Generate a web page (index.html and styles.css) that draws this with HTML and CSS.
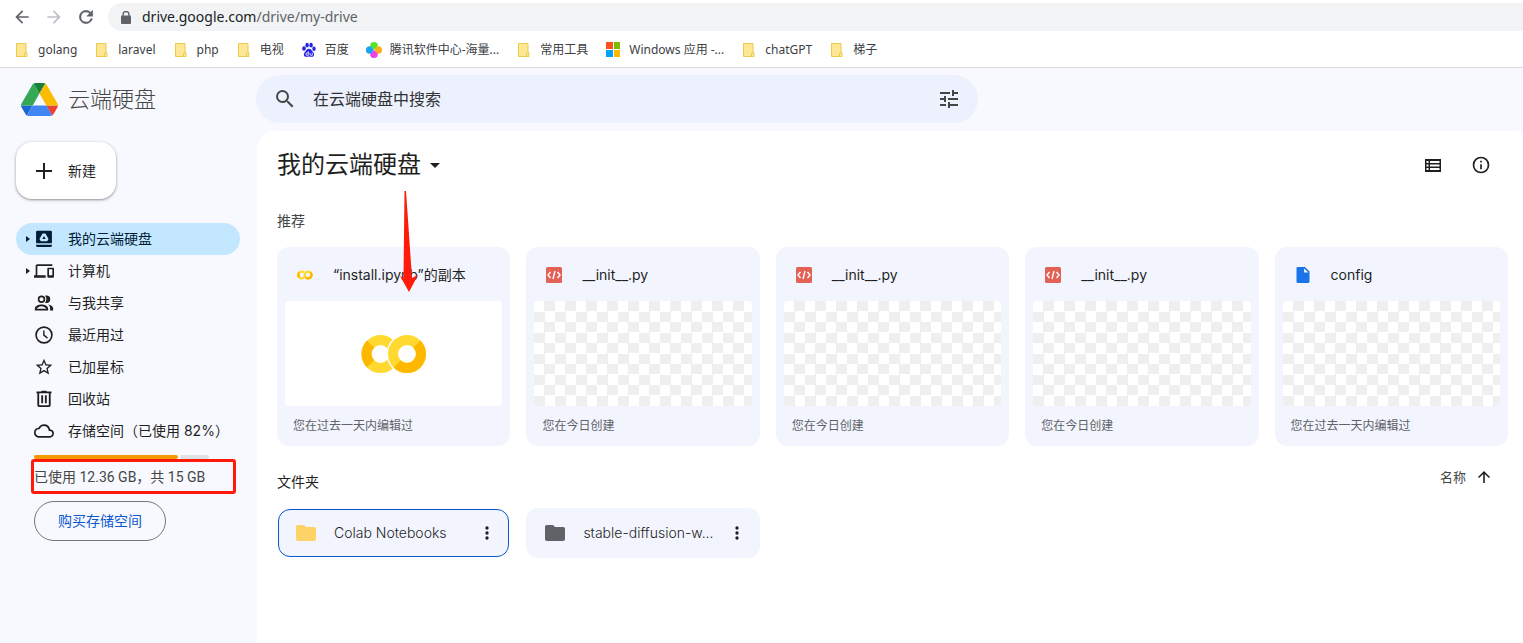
FILE: index.html
```html
<!DOCTYPE html>
<html lang="zh-CN">
<head>
<meta charset="utf-8">
<title>我的云端硬盘</title>
<link rel="stylesheet" href="styles.css">
</head>
<body>
<svg class="defs" aria-hidden="true">
  <symbol id="mark" viewBox="0 0 16 16"><path d="M2.500 1.500h9.500v9l1 .5v3.500h-10.500z" fill="#fde793" stroke="#ecc94f"/><path d="M10.500 14v-2.500q0-1 1.500-1" fill="none" stroke="#ecc94f"/></symbol>
  <symbol id="colab" viewBox="0 0 66 40">
    <circle cx="19.500" cy="20" r="14" fill="none" stroke="#ffd930" stroke-width="10"/>
    <path d="M9.600 10.100a14 14 0 0 0 0 19.800" fill="none" stroke="#ffb800" stroke-width="10"/>
    <circle cx="46" cy="20" r="20.500" class="colab-gap"/>
    <circle cx="46" cy="20" r="14" fill="none" stroke="#ffd930" stroke-width="10"/>
    <path d="M55.900 10.100a14 14 0 0 1-19.800 19.800" fill="none" stroke="#ffb800" stroke-width="10"/>
  </symbol>
  <symbol id="code" viewBox="0 0 16 16"><rect width="16" height="16" rx="1.500" fill="#e46155"/><path d="M4.500 5 2 8l2.500 3M11.500 5 14 8l-2.500 3M9 4 7 12" fill="none" stroke="#fff" stroke-width="1.400"/></symbol>
  <symbol id="dots" viewBox="0 0 24 24"><circle cx="12" cy="6" r="2"/><circle cx="12" cy="12" r="2"/><circle cx="12" cy="18" r="2"/></symbol>
  <symbol id="folder" viewBox="0 0 20 16"><path d="M1.800 0H8l2 2h8.200Q20 2 20 3.800v10.400q0 1.800-1.800 1.800H1.800Q0 16 0 14.200V1.800Q0 0 1.800 0z"/></symbol>
  <symbol id="caret" viewBox="0 0 4 6"><path d="M0 0l4 3-4 3z"/></symbol>
</svg>

<div class="toolbar">
  <button class="tool" aria-label="后退"><svg viewBox="0 0 24 24"><path d="M20 11H7.830l5.590-5.590L12 4l-8 8 8 8 1.410-1.410L7.830 13H20v-2z"/></svg></button>
  <button class="tool off" aria-label="前进"><svg viewBox="0 0 24 24"><path d="M12 4l-1.410 1.410L16.170 11H4v2h12.170l-5.580 5.590L12 20l8-8z"/></svg></button>
  <button class="tool" aria-label="刷新"><svg viewBox="0 0 24 24"><path d="M17.650 6.350A7.960 7.960 0 0 0 12 4a8 8 0 1 0 7.730 10h-2.080A6 6 0 1 1 12 6c1.660 0 3.140.69 4.220 1.780L13 11h7V4l-2.350 2.350z" stroke="#5f6368" stroke-width=".6"/></svg></button>
  <div class="omnibox">
    <svg class="lock" viewBox="0 0 10 13"><path d="M2 5V3.500a3 3 0 0 1 6 0V5" fill="none" stroke="#5f6368" stroke-width="1.400"/><rect y="4.500" width="10" height="8.500" rx="1"/></svg>
    <span>drive.google.com<span class="path">/drive/my-drive</span></span>
  </div>
</div>

<nav class="bookmarks" aria-label="书签">
  <a href="#"><svg><use href="#mark"/></svg>golang</a>
  <a href="#"><svg><use href="#mark"/></svg>laravel</a>
  <a href="#"><svg><use href="#mark"/></svg>php</a>
  <a href="#"><svg><use href="#mark"/></svg>电视</a>
  <a href="#"><svg viewBox="0 0 16 16"><g fill="#2424e0"><ellipse cx="3" cy="6.500" rx="1.800" ry="2.300"/><ellipse cx="6.100" cy="3.200" rx="1.700" ry="2.400"/><ellipse cx="10.100" cy="3.200" rx="1.700" ry="2.400"/><ellipse cx="13" cy="6.800" rx="1.700" ry="2.200"/><path d="M8 6.800c2 0 2.600 1.900 4 3.100 1.800 1.600 1.500 4.900-1 4.900-1 0-1.800-.4-3-.4s-2 .4-3 .4c-2.500 0-2.800-3.300-1-4.900 1.400-1.200 2-3.100 4-3.100z"/></g><path d="M7.300 9.300v4H6a1.200 1.200 0 0 1 0-2.400h1.300M9 10.800v1.700q0 .8.800.8h1.500v-2.500" fill="none" stroke="#fff" stroke-width=".8"/></svg>百度</a>
  <a href="#"><svg viewBox="0 0 16 16"><path d="M8 7.800 5 5.500C3.500 3.500 4 0 8 0s4.500 3.500 3 5.500z" fill="#55e52b"/><path d="M8.200 8 10.500 5C12.500 3.500 16 4 16 8s-3.500 4.500-5.500 3z" fill="#ffae1a"/><path d="M8 8.200l3 2.300c1.500 2 1 5.500-3 5.500s-4.500-3.500-3-5.500z" fill="#f23fe0"/><path d="M7.800 8l-2.300 3C3.500 12.500 0 12 0 8s3.500-4.500 5.500-3z" fill="#1aa0f5"/></svg>腾讯软件中心-海量...</a>
  <a href="#"><svg><use href="#mark"/></svg>常用工具</a>
  <a href="#"><svg viewBox="0 0 16 16"><path d="M1 0h7v7H1z" fill="#f9501d"/><path d="M9 0h6v7H9z" fill="#7fba00"/><path d="M1 8h7v7H1z" fill="#00a1f1"/><path d="M9 8h6v7H9z" fill="#ffb901"/></svg>Windows 应用 -...</a>
  <a href="#"><svg><use href="#mark"/></svg>chatGPT</a>
  <a href="#"><svg><use href="#mark"/></svg>梯子</a>
</nav>

<div class="app">
  <header class="header">
    <a class="brand" href="#">
      <svg viewBox="0 0 87.300 78"><path d="m6.600 66.850 3.850 6.650c.8 1.400 1.950 2.500 3.300 3.300l13.750-23.800h-27.500c0 1.550.4 3.100 1.200 4.500z" fill="#1967d2"/><path d="m43.650 25-13.750-23.800c-1.350.8-2.500 1.900-3.300 3.300l-25.400 44a9.060 9.060 0 0 0-1.200 4.500h27.500z" fill="#34a853"/><path d="m73.550 76.800c1.350-.8 2.500-1.900 3.300-3.300l1.600-2.750 7.650-13.250c.8-1.400 1.200-2.950 1.200-4.500h-27.502l5.852 11.500z" fill="#ea4335"/><path d="m43.650 25 13.750-23.800c-1.350-.8-2.900-1.200-4.500-1.200h-18.500c-1.600 0-3.150.45-4.500 1.200z" fill="#188038"/><path d="m59.800 53h-32.300l-13.750 23.800c1.350.8 2.900 1.200 4.500 1.200h50.800c1.600 0 3.150-.45 4.500-1.200z" fill="#4285f4"/><path d="m73.400 26.500-12.700-22c-.8-1.400-1.950-2.500-3.300-3.300l-13.750 23.800 16.150 28h27.450c0-1.550-.4-3.100-1.200-4.500z" fill="#fbbc04"/></svg>
      云端硬盘
    </a>
    <form class="search">
      <svg class="icon24" viewBox="0 0 24 24"><path d="M15.500 14h-.79l-.28-.27A6.470 6.470 0 0 0 16 9.500 6.500 6.500 0 1 0 9.500 16c1.610 0 3.090-.59 4.230-1.570l.27.28v.79l5 4.990L20.490 19l-4.990-5zm-6 0a4.500 4.500 0 1 1 0-9 4.500 4.500 0 0 1 0 9z"/></svg>
      <input type="text" placeholder="在云端硬盘中搜索" aria-label="在云端硬盘中搜索">
      <button class="plain" type="button" aria-label="高级搜索"><svg class="icon24" viewBox="0 0 24 24"><path d="M3 17v2h6v-2H3zM3 5v2h10V5H3zm10 16v-2h8v-2h-8v-2h-2v6h2zM7 9v2H3v2h4v2h2V9H7zm14 4v-2H11v2h10zm-6-4h2V7h4V5h-4V3h-2v6z"/></svg></button>
    </form>
  </header>

  <aside class="sidebar">
    <button class="new"><svg viewBox="0 0 16 16"><path d="M7 0h2v7h7v2H9v7H7V9H0V7h7z"/></svg>新建</button>
    <nav class="nav" aria-label="云端硬盘">
      <a class="active" href="#"><svg class="caret"><use href="#caret"/></svg><svg class="ico" viewBox="0 0 24 24"><path fill-rule="evenodd" d="M4 2h16q1.500 0 1.500 1.500V17h-19V3.500Q2.500 2 4 2zM10.300 5.500 6.500 12l1.700 2.800h7.600l1.700-2.800-3.800-6.500zM12 8.500l2 3.500h-4zM2.500 19h19v1.500q0 1-1.500 1H4q-1.500 0-1.500-1z"/></svg>我的云端硬盘</a>
      <a href="#"><svg class="caret"><use href="#caret"/></svg><svg class="ico" viewBox="0 0 24 24"><path d="M4 6h18V4H4c-1.100 0-2 .9-2 2v11H0v3h14v-3H4V6zm19 2h-6c-.55 0-1 .45-1 1v10c0 .55.45 1 1 1h6c.55 0 1-.45 1-1V9c0-.55-.45-1-1-1zm-1 9h-4v-7h4v7z"/></svg>计算机</a>
      <a href="#"><span class="caret"></span><svg class="ico" viewBox="0 0 24 24"><path d="M9 13.750c-3.340 0-8 1.670-8 5V21h16v-2.250c0-3.330-4.660-5-8-5zM3.200 19c.3-1.500 3.300-3.250 5.800-3.250S14.500 17.500 14.800 19zM9 12a4.500 4.500 0 1 0 0-9 4.500 4.500 0 0 0 0 9zm0-7a2.500 2.500 0 1 1 0 5 2.500 2.500 0 0 1 0-5zM17 13.900c1.300.9 2.300 2.300 2.300 4.200V21H23v-2.500c0-2.600-3-4.100-6-4.600zM15 12a4.500 4.500 0 0 0 0-9c-.6 0-1.200.1-1.700.4a6.500 6.500 0 0 1 0 8.200c.5.300 1.100.4 1.700.4z"/></svg>与我共享</a>
      <a href="#"><span class="caret"></span><svg class="ico" viewBox="0 0 24 24"><circle cx="12" cy="12" r="9.500" fill="none" stroke="#1f1f1f" stroke-width="2"/><path d="M11 6.500h1.700v5.300l4 3.200-1 1.400L11 12.600z"/></svg>最近用过</a>
      <a href="#"><span class="caret"></span><svg class="ico" viewBox="0 0 24 24"><path d="M22 9.240l-7.190-.62L12 2 9.190 8.630 2 9.240l5.460 4.730L5.820 21 12 17.270 18.180 21l-1.630-7.030L22 9.240zM12 15.400l-3.760 2.270 1-4.280-3.320-2.880 4.380-.38L12 6.100l1.710 4.040 4.380.38-3.320 2.880 1 4.280L12 15.400z"/></svg>已加星标</a>
      <a href="#"><span class="caret"></span><svg class="ico" viewBox="0 0 24 24"><path fill-rule="evenodd" d="M3 3h5.500l1-1h5l1 1H21v2.200h-1V19.500q0 2-2 2H6q-2 0-2-2V5.200H3zM6.200 5.200v14.200h11.600V5.200zM8.700 7.500h2.200v9.500H8.700zM13.100 7.500h2.200v9.500h-2.200z"/></svg>回收站</a>
      <a href="#"><span class="caret"></span><svg class="ico" viewBox="0 0 24 24"><path d="M19.350 10.040A7.490 7.490 0 0 0 12 4C9.110 4 6.600 5.640 5.350 8.040A5.994 5.994 0 0 0 0 14c0 3.310 2.690 6 6 6h13c2.760 0 5-2.240 5-5 0-2.640-2.050-4.780-4.650-4.960zM19 18H6c-2.210 0-4-1.790-4-4 0-2.050 1.530-3.760 3.560-3.970l1.070-.11.500-.95A5.469 5.469 0 0 1 12 6c2.620 0 4.880 1.860 5.390 4.430l.3 1.500 1.530.11A2.980 2.980 0 0 1 22 15c0 1.650-1.350 3-3 3z"/></svg>存储空间（已使用 82%）</a>
    </nav>
    <div class="storage">
      <div class="meter"><span class="used" style="width:82%"></span><span class="free"></span></div>
      <p>已使用 12.36 GB，共 15 GB<span class="highlight"></span></p>
      <button class="buy">购买存储空间</button>
    </div>
  </aside>

  <main class="main">
    <div class="titlebar">
      <button class="title">我的云端硬盘<svg viewBox="0 0 10 5"><path d="M0 0h10L5 5z"/></svg></button>
      <div class="actions">
        <button class="plain" aria-label="列表视图"><svg class="list" viewBox="0 0 16 13"><path fill-rule="evenodd" d="M0 0h16v13H0zM1.500 2v2h2V2zM5 2v2h9.500V2zM1.500 5.500v2h2v-2zM5 5.500v2h9.500v-2zM1.500 9v2h2V9zM5 9v2h9.500V9z"/></svg></button>
        <button class="plain" aria-label="查看详细信息"><svg class="ico" viewBox="0 0 24 24"><path d="M11 7h2v2h-2zm0 4h2v6h-2zm1-9a10 10 0 1 0 0 20 10 10 0 0 0 0-20zm0 18a8 8 0 1 1 0-16 8 8 0 0 1 0 16z"/></svg></button>
      </div>
    </div>
    <h2 class="suggest">推荐</h2>
    <div class="grid">
      <article class="card"><h3><svg class="type"><use href="#colab"/></svg>“install.ipynb”的副本</h3><div class="preview blank"><svg><use href="#colab"/></svg></div><p>您在过去一天内编辑过</p>
        <svg class="arrow" viewBox="0 0 18 101"><path d="M4.500 0h1.500l6 87 6-3-9 17L0 85l3.500 2z"/></svg></article>
      <article class="card"><h3><svg class="type"><use href="#code"/></svg>__init__.py</h3><div class="preview"></div><p>您在今日创建</p></article>
      <article class="card"><h3><svg class="type"><use href="#code"/></svg>__init__.py</h3><div class="preview"></div><p>您在今日创建</p></article>
      <article class="card"><h3><svg class="type"><use href="#code"/></svg>__init__.py</h3><div class="preview"></div><p>您在今日创建</p></article>
      <article class="card"><h3><svg class="type" viewBox="0 0 16 16"><path d="M2.500 0H10l4.500 4.500v10q0 1.500-1.500 1.500H3q-1.500 0-1.500-1.500V1.500Q1.500 0 2.500 0z" fill="#1a73e8"/><path d="M9 1.500v4h4.500z" fill="#f2f5fd"/></svg>config</h3><div class="preview"></div><p>您在过去一天内编辑过</p></article>
    </div>
    <div class="folders-head">
      <h2>文件夹</h2>
      <button class="sort">名称<svg viewBox="0 0 12 12"><path d="M5.200 12V2.900L1.100 7 0 5.900 6 0l6 5.900L10.900 7 6.800 2.900V12z"/></svg></button>
    </div>
    <div class="grid">
      <div class="folder selected"><svg class="yellow"><use href="#folder"/></svg><span>Colab Notebooks</span><button class="plain" aria-label="更多操作"><svg class="ico"><use href="#dots"/></svg></button></div>
      <div class="folder"><svg class="gray"><use href="#folder"/></svg><span>stable-diffusion-w...</span><button class="plain" aria-label="更多操作"><svg class="ico"><use href="#dots"/></svg></button></div>
    </div>
  </main>
</div>
</body>
</html>
```
FILE: styles.css
```css
* { box-sizing: border-box; }
body {
  margin: 0;
  min-height: 100vh;
  display: flex;
  flex-direction: column;
  font: 14px/20px Inter, "Noto Sans CJK SC", sans-serif;
  color: #1f1f1f;
  fill: #1f1f1f;
  background: #fff;
}
button, input { font: inherit; color: inherit; border: 0; padding: 0; background: none; }
button { fill: inherit; }
a { color: inherit; text-decoration: none; }
svg { flex: none; display: block; }
h2, h3, p { margin: 0; font: inherit; }
.defs { position: absolute; width: 0; height: 0; }
.plain { display: grid; place-items: center; }
.ico { width: 20px; height: 20px; }
.icon24 { width: 24px; height: 24px; fill: #444746; }
.colab-gap { fill: var(--under, #f2f5fd); }

.toolbar { display: flex; align-items: center; padding: 3px 0 0 12px; }
.tool { width: 32px; height: 28px; display: flex; align-items: center; fill: #5f6368; }
.tool svg { width: 20px; height: 20px; }
.tool.off { fill: #bdc1c6; }
.omnibox {
  flex: 1;
  display: flex;
  align-items: center;
  gap: 11px;
  height: 28px;
  padding-left: 13px;
  border-radius: 14px 0 0 14px;
  background: #f1f3f4;
  font-family: "Noto Sans", sans-serif;
  color: #202124;
}
.lock { width: 10px; height: 13px; fill: #5f6368; }
.path { color: #5f6368; }

.bookmarks {
  display: flex;
  align-items: center;
  gap: 17px;
  height: 37px;
  padding: 1px 0 0 14px;
  border-bottom: 1px solid #dadce0;
  font: 12px/16px "Noto Sans", "Noto Sans CJK SC", sans-serif;
  color: #3c4043;
  white-space: nowrap;
}
.bookmarks a { display: flex; align-items: center; gap: 8px; }
.bookmarks svg { width: 16px; height: 16px; }

.app {
  flex: 1;
  display: grid;
  grid-template: auto 1fr / 257px 1fr;
  background: #f8f9fe;
}
.header { grid-column: 1 / -1; display: flex; align-items: center; height: 63px; padding-bottom: 1px; font-weight: 300; }
.brand {
  width: 256px;
  display: flex;
  align-items: center;
  gap: 10px;
  padding-left: 21px;
  font-size: 22px;
  color: #444746;
}
.brand svg { width: 37px; height: 33px; }
.search {
  flex: 0 1 722px;
  display: flex;
  align-items: center;
  gap: 16px;
  height: 48px;
  padding: 0 17px;
  border-radius: 24px;
  background: #edf1fd;
  font-weight: 400;
}
.search input { flex: 1; min-width: 0; font-size: 16px; outline: 0; }
.search input::placeholder { color: #303134; opacity: 1; }

.sidebar { padding: 11px 17px 0 16px; }
.new {
  display: flex;
  align-items: center;
  gap: 16px;
  height: 57px;
  padding: 0 20px;
  border-radius: 16px;
  background: #fff;
  box-shadow: 0 1px 2px rgba(60, 64, 67, .4), 0 1px 3px 1px rgba(60, 64, 67, .15);
}
.new svg { width: 16px; height: 16px; }
.nav { margin-top: 24px; }
.nav a { display: flex; align-items: center; height: 32px; padding-left: 10px; border-radius: 16px; white-space: nowrap; }
.nav .active { background: #c2e7ff; color: #001d35; fill: #001d35; }
.nav .caret { width: 4px; height: 6px; margin-right: 4px; }
.nav .ico { margin-right: 14px; }
.storage { padding: 8px 0 0 18px; }
.meter { display: flex; gap: 2px; width: 175px; height: 4px; }
.used { border-radius: 2px; background: #f29900; }
.free { flex: 1; border-radius: 2px; background: #dfe0e4; }
.storage p { position: relative; padding: 8px 0 14px; color: #444746; white-space: nowrap; font-family: Roboto, "Noto Sans CJK SC", sans-serif; }
.highlight { position: absolute; inset: 0 -12px 7px -3px; width: 205px; border: 3px solid #ff1a0a; border-radius: 3px; }
.buy {
  height: 40px;
  padding: 0 23px;
  border: 1px solid #747775;
  border-radius: 20px;
  color: #0b57d0;
}

.main { padding: 0 15px 20px 20px; border-radius: 18px 6px 0 0; background: #fff; min-width: 0; }
.titlebar { display: flex; align-items: center; justify-content: space-between; height: 68px; }
.title { display: flex; align-items: center; gap: 9px; font-size: 24px; line-height: 32px; }
.title svg { width: 10px; height: 5px; }
.actions { display: flex; gap: 30px; padding-right: 17px; }
.list { width: 16px; height: 13px; }
.suggest { padding: 12px 0 16px; color: #444746; }
.grid { display: grid; grid-template-columns: repeat(5, minmax(0, 1fr)); gap: 16px; }
.card { position: relative; padding: 0 8px; border-radius: 12px; background: #f2f5fd; }
.card h3 { display: flex; align-items: center; height: 54px; padding: 2px 12px 0; white-space: nowrap; }
.type { width: 16px; height: 16px; margin-right: 20px; }
.preview {
  height: 105px;
  border-radius: 4px;
  background: conic-gradient(#efefef 25%, #fff 0 50%, #efefef 0 75%, #fff 0) 0 0 / 21px 21px;
}
.blank { --under: #fff; display: grid; place-items: center; background: #fff; }
.blank svg { width: 66px; height: 40px; }
.card p { padding: 10px 8px; font-size: 12px; color: #5f6368; }
.arrow { position: absolute; top: -56px; left: 123px; width: 18px; height: 101px; fill: #ff1a0a; }
.folders-head { display: flex; justify-content: space-between; align-items: flex-start; padding: 21px 18px 16px 0; }
.folders-head h2 { padding-top: 5px; }
.sort { display: flex; align-items: center; gap: 12px; font-size: 13px; color: #444746; }
.sort svg { width: 12px; height: 12px; }
.folder { display: flex; align-items: center; height: 50px; padding: 0 13px 0 19px; border-radius: 12px; background: #f2f5fd; font-weight: 300; }
.folder.selected { height: 48px; margin: 1px; padding: 0 11px 0 17px; border: 1px solid #0b57d0; }
.folder > svg { width: 20px; height: 16px; }
.folder span { flex: 1; padding-left: 18px; white-space: nowrap; }
.yellow { fill: #fdd267; }
.gray { fill: #5f6368; }
```
